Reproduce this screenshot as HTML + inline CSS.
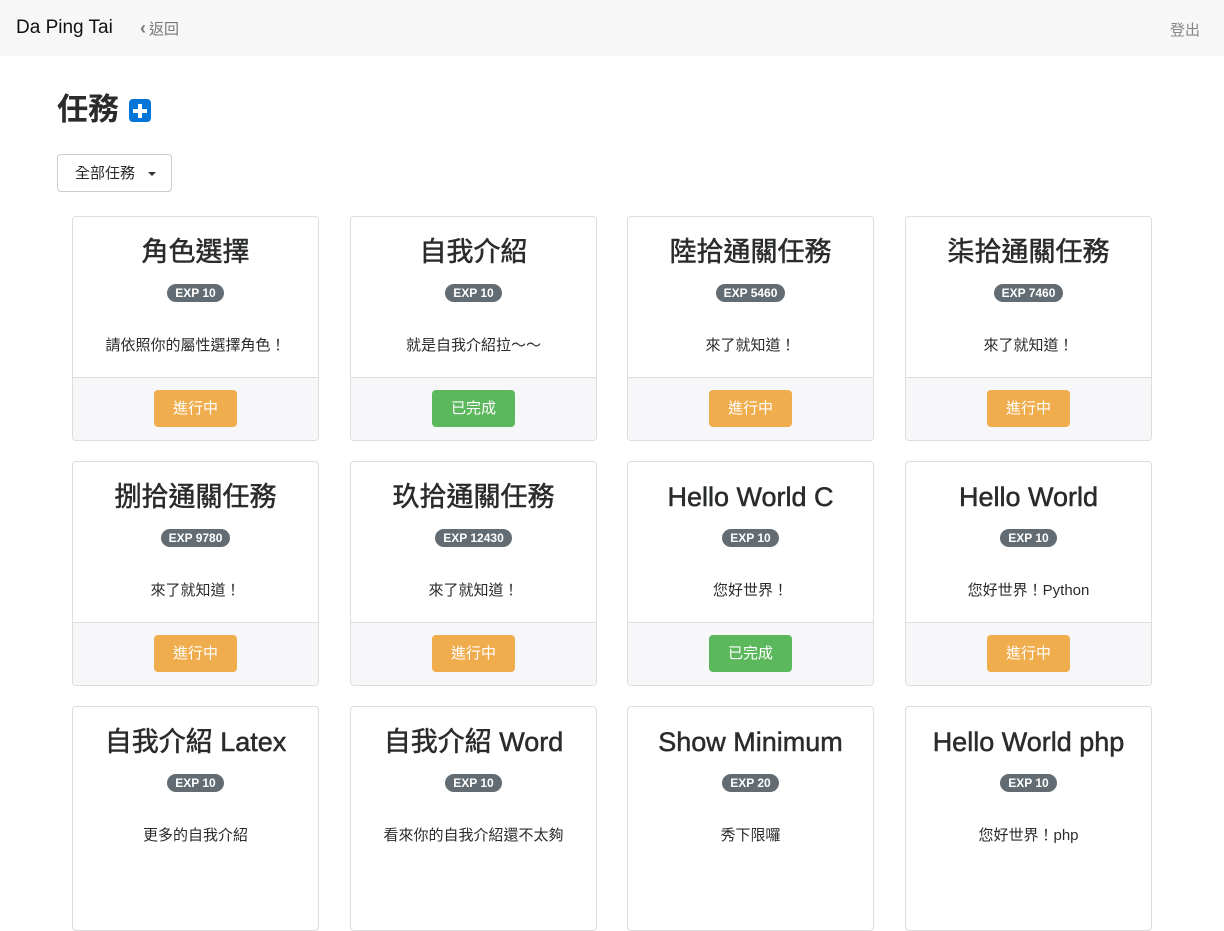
<!DOCTYPE html>
<html><head><meta charset="utf-8"><style>
*{box-sizing:border-box;margin:0;padding:0}
html,body{width:1224px;height:847px;overflow:hidden}
body{background:#fff;font-family:"Liberation Sans","Noto Sans CJK TC",sans-serif;color:#292b2c}
.nav{height:56px;background:#f7f7f7;position:relative}
.brand{position:absolute;left:16px;top:17px;font-size:19px;color:#111}
.back{position:absolute;left:140px;top:18px;font-size:15px;color:#777}
.back b{font-size:18px;margin-right:3px}
.out{position:absolute;right:24px;top:19px;font-size:15px;color:#888}
h1{position:absolute;left:57px;top:84px;font-size:31px;font-weight:bold;color:#292b2c}
.plus{position:absolute;left:129px;top:99px;width:22px;height:23px;background:#0275d8;border-radius:4px}
.plus:before{content:"";position:absolute;left:4px;top:9.5px;width:14px;height:4px;background:#fff}
.plus:after{content:"";position:absolute;left:9px;top:4.5px;width:4px;height:14px;background:#fff}
.dd{position:absolute;left:57px;top:154px;width:115px;height:38px;border:1px solid #ccc;border-radius:4px;font-size:15px;padding:7px 0 0 17px;color:#292b2c}
.dd:after{content:"";position:absolute;left:90px;top:17px;border-left:4px solid transparent;border-right:4px solid transparent;border-top:4px solid #333}
.card{position:absolute;width:247px;height:225px;border:1px solid #ddd;border-radius:4px;text-align:center;overflow:hidden}
.t{margin-top:18px;font-size:27px;line-height:34px;color:#292b2c;white-space:nowrap;-webkit-text-stroke:0.5px #292b2c}
.b{display:inline-block;margin-top:15px;background:#636c72;color:#fff;font-size:12px;font-weight:bold;border-radius:9px;padding:2px 8px;line-height:14px}
.d{margin-top:34px;font-size:15px;line-height:20px}
.f{position:absolute;left:0;right:0;top:160px;bottom:0;background:#f7f7f9;border-top:1px solid #ddd}
.btn{display:inline-block;margin-top:12px;width:83px;height:37px;line-height:37px;border-radius:4px;color:#fff;font-size:15px}
.o{background:#f0ad4e}.g{background:#5cb85c}
</style></head><body>
<div class="nav"><div class="brand">Da Ping Tai</div><div class="back"><b>‹</b>返回</div><div class="out">登出</div></div>
<h1>任務</h1><div class="plus"></div>
<div class="dd">全部任務</div>

<div class="card" style="left:72px;top:216px"><div class="t">角色選擇</div><span class="b">EXP 10</span><div class="d">請依照你的屬性選擇角色！</div><div class="f"><span class="btn o">進行中</span></div></div>
<div class="card" style="left:350px;top:216px"><div class="t">自我介紹</div><span class="b">EXP 10</span><div class="d">就是自我介紹拉～～</div><div class="f"><span class="btn g">已完成</span></div></div>
<div class="card" style="left:627px;top:216px"><div class="t">陸拾通關任務</div><span class="b">EXP 5460</span><div class="d">來了就知道！</div><div class="f"><span class="btn o">進行中</span></div></div>
<div class="card" style="left:905px;top:216px"><div class="t">柒拾通關任務</div><span class="b">EXP 7460</span><div class="d">來了就知道！</div><div class="f"><span class="btn o">進行中</span></div></div>

<div class="card" style="left:72px;top:461px"><div class="t">捌拾通關任務</div><span class="b">EXP 9780</span><div class="d">來了就知道！</div><div class="f"><span class="btn o">進行中</span></div></div>
<div class="card" style="left:350px;top:461px"><div class="t">玖拾通關任務</div><span class="b">EXP 12430</span><div class="d">來了就知道！</div><div class="f"><span class="btn o">進行中</span></div></div>
<div class="card" style="left:627px;top:461px"><div class="t">Hello World C</div><span class="b">EXP 10</span><div class="d">您好世界！</div><div class="f"><span class="btn g">已完成</span></div></div>
<div class="card" style="left:905px;top:461px"><div class="t">Hello World</div><span class="b">EXP 10</span><div class="d">您好世界！Python</div><div class="f"><span class="btn o">進行中</span></div></div>

<div class="card" style="left:72px;top:706px"><div class="t">自我介紹 Latex</div><span class="b">EXP 10</span><div class="d">更多的自我介紹</div></div>
<div class="card" style="left:350px;top:706px"><div class="t">自我介紹 Word</div><span class="b">EXP 10</span><div class="d">看來你的自我介紹還不太夠</div></div>
<div class="card" style="left:627px;top:706px"><div class="t">Show Minimum</div><span class="b">EXP 20</span><div class="d">秀下限囉</div></div>
<div class="card" style="left:905px;top:706px"><div class="t">Hello World php</div><span class="b">EXP 10</span><div class="d">您好世界！php</div></div>
</body></html>
